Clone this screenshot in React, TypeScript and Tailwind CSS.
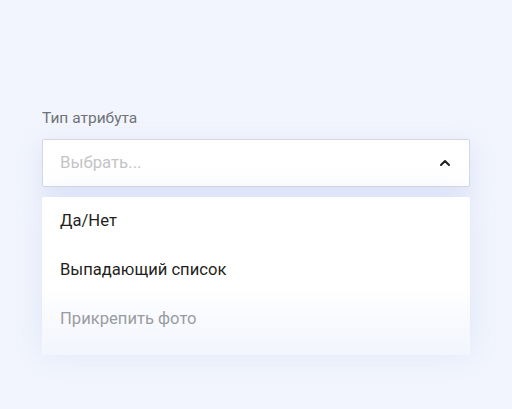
import { ChevronUp } from "lucide-react"

const options = [
    { label: "Да/Нет", muted: false },
    { label: "Выпадающий список", muted: false },
    { label: "Прикрепить фото", muted: true },
]

export default function App() {
    return (
        <div
            className="h-[409px] w-[512px] overflow-hidden bg-[#f2f5fd] px-[42px] pt-[108px]"
            style={{ fontFamily: "Roboto, 'Noto Sans', sans-serif" }}
        >
            <div className="flex flex-col">
                <span className="text-[15.5px] leading-5 text-[#6f7278]">Тип атрибута</span>
                <div className="mt-[11px] flex h-12 items-center justify-between rounded-[2px] border border-[#d6d8de] bg-white pl-[17px] pr-[16px] shadow-[0_6px_24px_rgba(120,145,230,0.18)]">
                    <span className="text-[16.8px] text-[#c4c4c6]">Выбрать...</span>
                    <ChevronUp className="h-4 w-4 text-[#1f1f1f]" strokeWidth={3} />
                </div>
                <div className="mt-[10px] flex h-[158px] flex-col rounded-[2px] bg-gradient-to-b from-white from-55% to-[#f2f5fd] shadow-[0_-2px_30px_rgba(120,145,230,0.14)]">
                    {options.map((o) => (
                        <div key={o.label} className="flex h-[49px] items-center pl-[18px]">
                            <span
                                className={`text-[16.6px] ${o.muted ? "text-[#9a9ca1]" : "text-[#1f1f21]"}`}
                            >
                                {o.label}
                            </span>
                        </div>
                    ))}
                </div>
            </div>
        </div>
    )
}
